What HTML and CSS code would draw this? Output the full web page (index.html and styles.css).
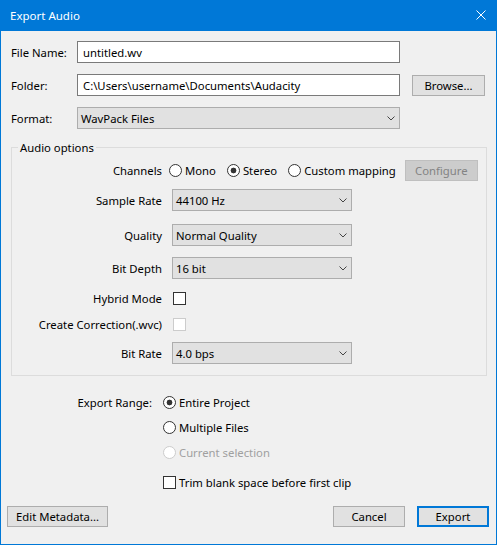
FILE: index.html
```html
<!DOCTYPE html>
<html lang="en">
<head>
<meta charset="utf-8">
<title>Export Audio</title>
<link rel="stylesheet" href="styles.css">
</head>
<body>
<div class="window">
  <header class="titlebar">
    <span class="title">Export Audio</span>
    <svg class="close" width="10" height="10" viewBox="0 0 10 10"><path d="M0.5 0.5 L9.5 9.5 M9.5 0.5 L0.5 9.5" stroke="#fff" stroke-width="1" fill="none"/></svg>
  </header>
  <main class="content">
    <div class="fields">
      <span class="field-label">File Name:</span>
      <div class="input">untitled.wv</div>
      <span></span>
      <span class="field-label">Folder:</span>
      <div class="input">C:\Users\username\Documents\Audacity</div>
      <div class="btn browse">Browse...</div>
      <span class="field-label">Format:</span>
      <div class="select">WavPack Files<svg class="chev" width="8" height="5" viewBox="0 0 8 5"><path d="M0.5 0.5 L4 4 L7.5 0.5" fill="none" stroke="#444" stroke-width="1"/></svg></div>
      <span></span>
    </div>

    <section class="group">
      <div class="legend">Audio options</div>
      <div class="opt-row row-channels">
        <span class="opt-label">Channels</span>
        <div class="choices">
          <span class="radio"><span class="radio-dot"></span>Mono</span>
          <span class="radio"><span class="radio-dot on"></span>Stereo</span>
          <span class="radio"><span class="radio-dot"></span>Custom mapping</span>
          <div class="btn configure">Configure</div>
        </div>
      </div>
      <div class="opt-row row-sample">
        <span class="opt-label">Sample Rate</span>
        <div class="select opt-select">44100 Hz<svg class="chev" width="8" height="5" viewBox="0 0 8 5"><path d="M0.5 0.5 L4 4 L7.5 0.5" fill="none" stroke="#444" stroke-width="1"/></svg></div>
      </div>
      <div class="opt-row row-quality">
        <span class="opt-label">Quality</span>
        <div class="select opt-select">Normal Quality<svg class="chev" width="8" height="5" viewBox="0 0 8 5"><path d="M0.5 0.5 L4 4 L7.5 0.5" fill="none" stroke="#444" stroke-width="1"/></svg></div>
      </div>
      <div class="opt-row row-depth">
        <span class="opt-label">Bit Depth</span>
        <div class="select opt-select">16 bit<svg class="chev" width="8" height="5" viewBox="0 0 8 5"><path d="M0.5 0.5 L4 4 L7.5 0.5" fill="none" stroke="#444" stroke-width="1"/></svg></div>
      </div>
      <div class="opt-row row-hybrid">
        <span class="opt-label">Hybrid Mode</span>
        <span class="check"></span>
      </div>
      <div class="opt-row row-correction">
        <span class="opt-label">Create Correction(.wvc)</span>
        <span class="check disabled"></span>
      </div>
      <div class="opt-row row-bitrate">
        <span class="opt-label">Bit Rate</span>
        <div class="select opt-select">4.0 bps<svg class="chev" width="8" height="5" viewBox="0 0 8 5"><path d="M0.5 0.5 L4 4 L7.5 0.5" fill="none" stroke="#444" stroke-width="1"/></svg></div>
      </div>
    </section>

    <div class="range">
      <span class="range-label">Export Range:</span>
      <span class="radio"><span class="radio-dot on"></span>Entire Project</span>
      <span></span>
      <span class="radio"><span class="radio-dot"></span>Multiple Files</span>
      <span></span>
      <span class="radio disabled"><span class="radio-dot"></span>Current selection</span>
      <span></span>
      <span class="checkline"><span class="check"></span>Trim blank space before first clip</span>
    </div>

    <footer class="buttons">
      <div class="btn metadata">Edit Metadata...</div>
      <div class="btn cancel">Cancel</div>
      <div class="btn export">Export</div>
    </footer>
  </main>
</div>
</body>
</html>
```
FILE: styles.css
```css
* { box-sizing: border-box; }
html, body { margin: 0; padding: 0; }
body {
  font-family: "Noto Sans", "Open Sans", sans-serif;
  font-size: 11.3px;
  color: #000;
  background: #f0f0f0;
}
.window {
  width: 497px;
  height: 545px;
  border: 1px solid #0078d7;
  border-top: 0;
  background: #f0f0f0;
  display: flex;
  flex-direction: column;
}
.titlebar {
  height: 31px;
  flex: none;
  background: #0078d7;
  color: #fff;
  display: flex;
  align-items: center;
  justify-content: space-between;
  padding: 0 10px 0 9px;
}
.title { font-size: 11.5px; }
.close { display: block; margin-top: -1px; }

.content { padding: 10px 10px 0 10px; display: flex; flex-direction: column; }

.fields {
  display: grid;
  grid-template-columns: 66px 323px auto;
  grid-auto-rows: 22px;
  row-gap: 11px;
  align-items: center;
}
.input {
  height: 22px;
  border: 1px solid #7a7a7a;
  background: #fff;
  padding: 0 5px;
  display: flex;
  align-items: center;
  white-space: nowrap;
}
.select {
  height: 22px;
  border: 1px solid #adadad;
  background: #e1e1e1;
  padding: 0 4px 0 3px;
  display: flex;
  align-items: center;
  justify-content: space-between;
  white-space: nowrap;
}
.chev { display: block; flex: none; }
.btn {
  height: 21px;
  border: 1px solid #adadad;
  background: #e1e1e1;
  display: flex;
  align-items: center;
  justify-content: center;
  white-space: nowrap;
  flex: none;
}
.browse { width: 73px; margin-left: 12px; }

.group {
  margin-top: 18px;
  width: 476px;
  border: 1px solid #dcdcdc;
  padding: 0 0 11px 0;
  display: flex;
  flex-direction: column;
}
.legend {
  align-self: flex-start;
  margin: -8px 0 0 6px;
  padding: 0 2px;
  line-height: 16px;
  height: 16px;
  background: #f0f0f0;
}
.opt-row { display: flex; align-items: center; gap: 10px; }
.opt-label { width: 150px; flex: none; text-align: right; white-space: nowrap; }
.row-channels { height: 21px; margin-top: 4px; }
.row-sample { margin-top: 8px; }
.row-quality { margin-top: 13px; }
.row-depth { margin-top: 11px; }
.row-hybrid { height: 18px; margin-top: 10px; }
.row-correction { height: 18px; margin-top: 8px; }
.row-bitrate { margin-top: 9px; }
.opt-select { width: 180px; }

.choices { display: flex; align-items: center; gap: 11px; margin-left: -3px; }
.configure {
  width: 73px;
  margin-left: -2px;
  background: #cccccc;
  border-color: #bfbfbf;
  color: #838383;
}

.radio { display: flex; align-items: center; gap: 3px; white-space: nowrap; height: 16px; }
.radio-dot {
  width: 13px;
  height: 13px;
  flex: none;
  border: 1px solid #333;
  border-radius: 50%;
  background: #fff;
}
.radio-dot.on { background: radial-gradient(circle, #333 0 2.6px, #fff 3.2px); }
.radio.disabled { color: #a0a0a0; }
.radio.disabled .radio-dot { border-color: #cccccc; }

.check {
  width: 13px;
  height: 13px;
  flex: none;
  border: 1px solid #333;
  background: #fff;
  margin-left: 1px;
}
.check.disabled { border-color: #cccccc; }

.range {
  margin-top: 18px;
  display: grid;
  grid-template-columns: 141px auto;
  column-gap: 11px;
  row-gap: 9px;
  grid-auto-rows: 16px;
  align-items: center;
}
.range-label { text-align: right; white-space: nowrap; }
.checkline { display: flex; align-items: center; gap: 3px; margin-top: 10px; white-space: nowrap; }
.checkline .check { margin-left: 0; }

.buttons {
  margin: 21px -3px 0 -4px;
  display: flex;
  align-items: center;
}
.metadata { width: 101px; }
.cancel { width: 72px; margin-left: auto; }
.export { width: 72px; margin-left: 12px; border: 2px solid #0078d7; }
```
